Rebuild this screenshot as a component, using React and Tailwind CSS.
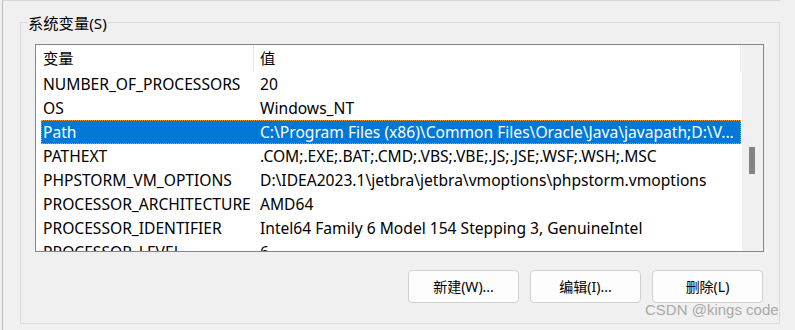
const rows = [
  { name: 'NUMBER_OF_PROCESSORS', value: '20' },
  { name: 'OS', value: 'Windows_NT' },
  { name: 'Path', value: 'C:\\Program Files (x86)\\Common Files\\Oracle\\Java\\javapath;D:\\V...', selected: true },
  { name: 'PATHEXT', value: '.COM;.EXE;.BAT;.CMD;.VBS;.VBE;.JS;.JSE;.WSF;.WSH;.MSC' },
  { name: 'PHPSTORM_VM_OPTIONS', value: 'D:\\IDEA2023.1\\jetbra\\jetbra\\vmoptions\\phpstorm.vmoptions' },
  { name: 'PROCESSOR_ARCHITECTURE', value: 'AMD64' },
  { name: 'PROCESSOR_IDENTIFIER', value: 'Intel64 Family 6 Model 154 Stepping 3, GenuineIntel' },
  { name: 'PROCESSOR_LEVEL', value: '6' },
];

const buttons = ['新建(W)...', '编辑(I)...', '删除(L)'];

const App = () => {
  return (
    <div className="relative w-[795px] h-[330px] overflow-hidden bg-[#f0f0f0] text-black font-['Noto_Sans','Noto_Sans_CJK_SC',sans-serif]">
      <div className="ml-[2px] w-[778px] h-full border-l border-t border-l-[#bcbcbc] border-t-[#d6d6d6] pl-[17px] pt-[21px]">
        {/* System variables group */}
        <div className="relative w-[760px] h-[302px] border border-[#dadada] pl-[14px] pt-[21px]">
          <span className="absolute left-[6px] top-[-10px] px-[1px] bg-[#f0f0f0] text-[15.3px] leading-[20px]">
            系统变量(S)
          </span>

          <div className="flex w-[729px] h-[208px] border border-[#828790] bg-white">
            <div className="flex-1 overflow-hidden">
              <div className="flex h-[27px] items-center text-[15.3px]">
                <div className="w-[218px] h-full flex items-center pl-[7px] border-r border-[#e5e5e5]">变量</div>
                <div className="flex-1 h-full flex items-center pl-[6px] border-r border-[#e5e5e5]">值</div>
                <div className="w-[1px]" />
              </div>
              <div className="pl-[5px]">
                {rows.map((row) => (
                  <div
                    key={row.name}
                    className={`flex w-[700px] h-[24px] items-center text-[15.6px] leading-[24px] whitespace-nowrap ${
                      row.selected
                        ? 'bg-[#0078d7] text-white outline-1 outline-dotted outline-[#e39a3c] -outline-offset-1'
                        : ''
                    }`}
                  >
                    <div className="w-[212px] pl-[2px]">{row.name}</div>
                    <div className="flex-1 pl-[7px]">{row.value}</div>
                  </div>
                ))}
              </div>
            </div>
            {/* Scrollbar */}
            <div className="w-[21px] h-full bg-[#f0f0f0] pl-[7px] pt-[102px]">
              <div className="w-[6px] h-[27px] bg-[#858585]" />
            </div>
          </div>

          <div className="flex w-[728px] justify-end gap-[11px] mt-[18px]">
            {buttons.map((label) => (
              <button
                key={label}
                className="w-[111px] h-[33px] rounded-[4px] border border-[#d0d0d0] bg-[#fdfdfd] text-[14px] text-black"
              >
                {label}
              </button>
            ))}
          </div>
        </div>
      </div>

      {/* Watermark */}
      <span className="absolute left-[645px] top-[300px] text-[15px] leading-[20px] text-[#a9a9a9] font-['Liberation_Sans',sans-serif] whitespace-nowrap">
        CSDN @kings code
      </span>
    </div>
  );
};

export default App;
